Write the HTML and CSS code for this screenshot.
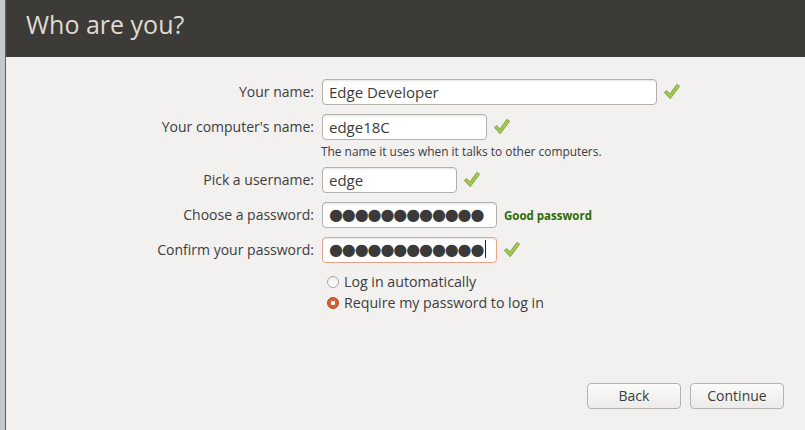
FILE: index.html
```html
<!DOCTYPE html>
<html>
<head>
<meta charset="utf-8">
<link rel="stylesheet" href="styles.css">
</head>
<body>
<div class="window">
  <div class="edge"></div>
  <div class="main">
    <div class="header"><h1 class="title">Who are you?</h1></div>
    <div class="form">
      <div class="label">Your name:</div>
      <div class="field">
        <div class="input w-name">Edge Developer</div>
        <svg class="check" viewBox="0 0 20 20"><path d="M1.5 10.5 L4.5 8.5 L7.5 12.5 L15.5 1.5 L18.5 3.5 L8 17.5 Z" /></svg>
      </div>

      <div class="label">Your computer's name:</div>
      <div class="fieldcol">
        <div class="field">
          <div class="input w-comp">edge18C</div>
          <svg class="check" viewBox="0 0 20 20"><path d="M1.5 10.5 L4.5 8.5 L7.5 12.5 L15.5 1.5 L18.5 3.5 L8 17.5 Z" /></svg>
        </div>
        <div class="hint">The name it uses when it talks to other computers.</div>
      </div>

      <div class="label">Pick a username:</div>
      <div class="field">
        <div class="input w-user">edge</div>
        <svg class="check" viewBox="0 0 20 20"><path d="M1.5 10.5 L4.5 8.5 L7.5 12.5 L15.5 1.5 L18.5 3.5 L8 17.5 Z" /></svg>
      </div>

      <div class="label">Choose a password:</div>
      <div class="field">
        <div class="input w-pass dots">●●●●●●●●●●●●</div>
        <span class="strength">Good password</span>
      </div>

      <div class="label">Confirm your password:</div>
      <div class="field">
        <div class="input w-pass dots focus">●●●●●●●●●●●●<span class="caret"></span></div>
        <svg class="check" viewBox="0 0 20 20"><path d="M1.5 10.5 L4.5 8.5 L7.5 12.5 L15.5 1.5 L18.5 3.5 L8 17.5 Z" /></svg>
      </div>

      <div></div>
      <div class="radios">
        <div class="radio"><span class="dot"></span>Log in automatically</div>
        <div class="radio"><span class="dot on"></span>Require my password to log in</div>
      </div>
    </div>
    <div class="footer">
      <div class="btn">Back</div>
      <div class="btn">Continue</div>
    </div>
  </div>
</div>
</body>
</html>
```

FILE: styles.css
```css
* { box-sizing: border-box; }
html, body { margin: 0; padding: 0; }
body {
  width: 805px;
  height: 430px;
  overflow: hidden;
  font-family: "Open Sans", "DejaVu Sans", sans-serif;
  color: #3c3c3c;
  background: #f2f1f0;
}
.window {
  display: flex;
  height: 430px;
}
.edge {
  width: 6px;
  flex: none;
  background: #c5c8cf;
  border-right: 1px solid #5e5e5e;
}
.main {
  flex: 1;
  display: flex;
  flex-direction: column;
  background: #f2f1f0;
}
.header {
  height: 57px;
  background: #3c3b37;
  padding-left: 20px;
  display: flex;
  align-items: center;
}
.title {
  margin: 0;
  font-weight: 400;
  font-size: 25px;
  color: #dfdbd2;
  line-height: 1;
  padding-bottom: 8px;
}
.form {
  display: grid;
  grid-template-columns: 308px auto;
  column-gap: 8px;
  row-gap: 9px;
  padding-top: 22px;
  align-items: start;
}
.label {
  text-align: right;
  font-size: 14px;
  line-height: 26px;
  height: 26px;
  color: #3c3c3c;
}
.field {
  display: flex;
  align-items: center;
  height: 26px;
}
.fieldcol { display: flex; flex-direction: column; }
.input {
  height: 26px;
  border: 1px solid #b3b1ab;
  border-radius: 4px;
  background: linear-gradient(#f6f6f5 0px, #ffffff 4px, #ffffff);
  box-shadow: inset 0 1px 1px rgba(0,0,0,0.06);
  font-size: 15px;
  line-height: 24px;
  padding-left: 6px;
  color: #3c3c3c;
  white-space: nowrap;
  overflow: hidden;
}
.w-name { width: 335px; }
.w-comp { width: 165px; }
.w-user { width: 135px; }
.w-pass { width: 175px; }
.dots {
  font-family: "DejaVu Sans", sans-serif;
  font-size: 16px;
  letter-spacing: -1.1px;
  color: #3a3a3a;
  padding-left: 6px;
}
.focus { border-color: #e7a187; }
.caret {
  display: inline-block;
  width: 1px;
  height: 18px;
  background: #222;
  vertical-align: -3px;
  margin-left: 2px;
}
.check {
  width: 18px;
  height: 18px;
  margin-left: 6px;
}
.check path {
  fill: #a4c95a;
  stroke: #7a9e2c;
  stroke-width: 1;
  stroke-linejoin: round;
}
.hint {
  font-size: 11.9px;
  line-height: 14px;
  margin-top: 4px;
  color: #3c3c3c;
  margin-left: -1px;
}
.strength {
  margin-left: 7px;
  font-size: 11.5px;
  font-weight: 700;
  color: #2e6b00;
}
.radios {
  display: flex;
  flex-direction: column;
  padding-left: 5px;
  margin-top: -1px;
}
.radio {
  display: flex;
  align-items: center;
  height: 21px;
  font-size: 14.2px;
  color: #3c3c3c;
}
.dot {
  width: 12px;
  height: 12px;
  border-radius: 50%;
  border: 1px solid #a9a7a2;
  background: linear-gradient(#f0f0ef, #ffffff);
  margin-right: 5px;
  flex: none;
}
.dot.on {
  border-color: #b6451f;
  background: radial-gradient(circle, #ffffff 0 2px, #d9643a 2.5px, #c9522a 100%);
}
.footer {
  margin-top: auto;
  display: flex;
  justify-content: flex-end;
  gap: 9px;
  padding: 0 21px 21px 0;
}
.btn {
  width: 94px;
  height: 26px;
  border: 1px solid #b5b3ae;
  border-radius: 4px;
  background: linear-gradient(#fbfbfa, #ecebe9);
  font-size: 14px;
  line-height: 24px;
  text-align: center;
  color: #3c3c3c;
}
```
